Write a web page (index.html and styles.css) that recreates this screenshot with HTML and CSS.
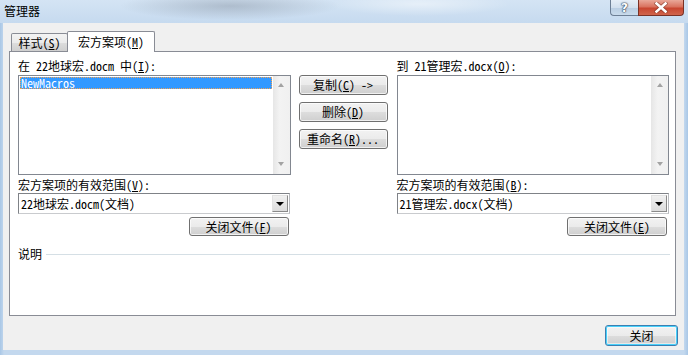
FILE: index.html
```html
<!DOCTYPE html>
<html lang="zh-CN">
<head>
<meta charset="utf-8">
<title>管理器</title>
<link rel="stylesheet" href="styles.css">
</head>
<body>
<div class="window">
  <div class="titlebar">
    <span class="title">管理器</span>
    <div class="caption">
      <div class="cbtn help">?</div>
      <div class="cbtn close">
        <svg width="14" height="11" viewBox="0 0 14 11">
          <path d="M2.5 1.5 L11.5 9.5 M11.5 1.5 L2.5 9.5" stroke="#6b2a1c" stroke-width="4.2" stroke-linecap="square" fill="none" opacity="0.55"/>
          <path d="M2.5 1.5 L11.5 9.5 M11.5 1.5 L2.5 9.5" stroke="#ffffff" stroke-width="2.6" stroke-linecap="square" fill="none"/>
        </svg>
      </div>
    </div>
  </div>
  <div class="client">
    <div class="tabs">
      <div class="tab">样式(<u>S</u>)</div>
      <div class="tab active">宏方案项(<u>M</u>)</div>
    </div>
    <div class="panel">
      <div class="cols">
        <div class="col">
          <div class="label">在 22地球宏.docm 中(<u>I</u>):</div>
          <div class="list">
            <div class="items">
              <div class="item selected">NewMacros</div>
            </div>
            <div class="vscroll">
              <div class="arrow up"></div>
              <div class="arrow down"></div>
            </div>
          </div>
          <div class="label scope">宏方案项的有效范围(<u>V</u>):</div>
          <div class="combo">
            <span class="combo-text">22地球宏.docm(文档)</span>
            <div class="drop"><span class="tri"></span></div>
          </div>
          <button class="btn closefile">关闭文件(<u>F</u>)</button>
        </div>
        <div class="mid">
          <button class="btn">复制(<u>C</u>) -&gt;</button>
          <button class="btn">删除(<u>D</u>)</button>
          <button class="btn">重命名(<u>R</u>)...</button>
        </div>
        <div class="col">
          <div class="label">到 21管理宏.docx(<u>O</u>):</div>
          <div class="list">
            <div class="items"></div>
            <div class="vscroll">
              <div class="arrow up"></div>
              <div class="arrow down"></div>
            </div>
          </div>
          <div class="label scope">宏方案项的有效范围(<u>B</u>):</div>
          <div class="combo">
            <span class="combo-text">21管理宏.docx(文档)</span>
            <div class="drop"><span class="tri"></span></div>
          </div>
          <button class="btn closefile">关闭文件(<u>E</u>)</button>
        </div>
      </div>
      <div class="desc">
        <span>说明</span>
        <div class="rule"></div>
      </div>
    </div>
    <div class="footer">
      <button class="btn default">关闭</button>
    </div>
  </div>
</div>
</body>
</html>
```

FILE: styles.css
```css
* { box-sizing: border-box; }
html, body { margin: 0; padding: 0; }
body {
  width: 688px;
  height: 355px;
  overflow: hidden;
  font-family: "Noto Sans Mono CJK SC", "Noto Sans CJK SC", sans-serif;
  font-size: 12px;
  line-height: 12px;
  color: #000;
  background: linear-gradient(90deg, #a9c7e6 0, #c3d8ee 4px, #c3d8ee 684px, #a9c7e6 688px);
}
u { text-decoration: underline; text-underline-offset: 1px; }

.window {
  display: flex;
  flex-direction: column;
  height: 355px;
}

.titlebar {
  height: 23px;
  display: flex;
  justify-content: space-between;
  align-items: flex-start;
  background:
    radial-gradient(ellipse 110px 14px at 230px 6px, rgba(110,120,135,0.35), rgba(110,120,135,0) 100%),
    radial-gradient(ellipse 90px 12px at 420px 4px, rgba(255,255,255,0.45), rgba(255,255,255,0) 100%),
    linear-gradient(180deg, #d4e4f4 0%, #c6daef 100%);
}
.title {
  padding: 5px 0 0 4px;
  line-height: 12px;
  color: #000;
}
.caption {
  display: flex;
  margin-right: 4px;
}
.cbtn {
  height: 16px;
  display: flex;
  align-items: center;
  justify-content: center;
  border: 1px solid #6d7f95;
  border-top: none;
}
.help {
  width: 28px;
  border-radius: 0 0 0 4px;
  border-right: none;
  background: linear-gradient(180deg, #e6eef7 0%, #d3e0ee 50%, #b9cde2 51%, #c9dbec 100%);
  color: #fff;
  font-family: "DejaVu Sans", sans-serif;
  font-weight: bold;
  font-size: 12px;
  text-shadow: 0 0 1px #2c3e55, 0 0 1px #2c3e55, 0 0 2px #2c3e55;
}
.close {
  width: 46px;
  border-radius: 0 0 4px 0;
  border-color: #7a3226;
  background: linear-gradient(180deg, #e9a899 0%, #d9735f 45%, #c84630 55%, #d0654c 100%);
}

.client {
  flex: 1;
  margin: 0 4px 5px 3px;
  background: #f0f0f0;
  padding: 8px 0 4px 6px;
  display: flex;
  flex-direction: column;
}

.tabs {
  height: 20px;
  display: flex;
  align-items: flex-end;
  padding-left: 2px;
}
.tab {
  width: 57px;
  height: 18px;
  border: 1px solid #898c95;
  border-bottom: none;
  border-radius: 2px 2px 0 0;
  background: linear-gradient(180deg, #f3f3f3 0%, #ebebeb 50%, #dddddd 51%, #cfcfcf 100%);
  display: flex;
  justify-content: center;
  padding-top: 3px;
}
.tab.active {
  position: relative;
  z-index: 1;
  width: 88px;
  height: 21px;
  margin-left: -1px;
  margin-bottom: -1px;
  background: #fff;
  padding-top: 4px;
}

.panel {
  height: 265px;
  margin-right: 8px;
  border: 1px solid #898c95;
  background: #fff;
  padding: 8px 6px 0 8px;
}

.cols {
  display: flex;
}
.col {
  width: 273px;
  display: flex;
  flex-direction: column;
}
.label {
  height: 12px;
  white-space: nowrap;
}
.list {
  margin-top: 3px;
  height: 100px;
  border: 1px solid #828790;
  display: flex;
  background: #fff;
}
.items {
  flex: 1;
  padding: 1px 1px 0 1px;
}
.item {
  height: 12px;
  line-height: 12px;
  padding-left: 1px;
}
.item.selected {
  background: #3399ff;
  color: #fff;
  outline: 1px dotted #f2a255;
  outline-offset: -1px;
}
.vscroll {
  width: 17px;
  background: linear-gradient(90deg, #e6e6e6 0%, #f3f3f3 40%, #f0f0f0 100%);
  display: flex;
  flex-direction: column;
  justify-content: space-between;
  align-items: center;
  padding: 7px 0 8px;
}
.arrow {
  width: 0;
  height: 0;
  border-left: 3.5px solid transparent;
  border-right: 3.5px solid transparent;
}
.arrow.up { border-bottom: 4px solid #a3a3a3; }
.arrow.down { border-top: 4px solid #a3a3a3; }

.scope { margin-top: 4px; }
.combo {
  margin-top: 2px;
  width: 272px;
  height: 21px;
  border: 1px solid #7f8287;
  border-right-color: #b7b9bd;
  border-bottom-color: #c9cbce;
  background: #fff;
  display: flex;
  align-items: center;
  justify-content: space-between;
  padding: 1px 1px 1px 2px;
}
.combo-text { white-space: nowrap; }
.drop {
  width: 16px;
  height: 17px;
  border: 1px solid #8a8a8a;
  border-top-color: #e2e2e2;
  border-left-color: #e2e2e2;
  background: linear-gradient(180deg, #f0f0f0, #dcdcdc);
  display: flex;
  align-items: center;
  justify-content: center;
}
.tri {
  width: 0;
  height: 0;
  border-left: 4px solid transparent;
  border-right: 4px solid transparent;
  border-top: 4px solid #000;
}

.btn {
  font: inherit;
  color: #000;
  margin: 0;
  padding: 0;
  height: 20px;
  border: 1px solid #707070;
  border-radius: 3px;
  background: linear-gradient(180deg, #f2f2f2 0%, #ebebeb 50%, #dddddd 51%, #cfcfcf 100%);
  box-shadow: inset 0 0 0 1px rgba(255,255,255,0.7);
  display: flex;
  align-items: center;
  justify-content: center;
  white-space: nowrap;
}
.closefile {
  margin-top: 3px;
  width: 100px;
  height: 19px;
  align-self: flex-end;
  margin-right: 2px;
}

.mid {
  width: 89px;
  margin: 0 9px 0 8px;
  padding-top: 15px;
  display: flex;
  flex-direction: column;
  gap: 7px;
}
.mid .btn { width: 89px; }

.desc {
  width: 652px;
  margin-top: 12px;
  display: flex;
  align-items: center;
}
.rule {
  flex: 1;
  height: 1px;
  margin-left: 4px;
  background: #d5dfe5;
}

.footer {
  margin-top: 9px;
  padding-right: 6px;
  display: flex;
  justify-content: flex-end;
}
.btn.default {
  width: 73px;
  height: 21px;
  border-color: #3c7fb1;
  box-shadow: inset 0 0 0 1px #48d1fb, inset 0 0 0 2px rgba(255,255,255,0.5);
}
```
